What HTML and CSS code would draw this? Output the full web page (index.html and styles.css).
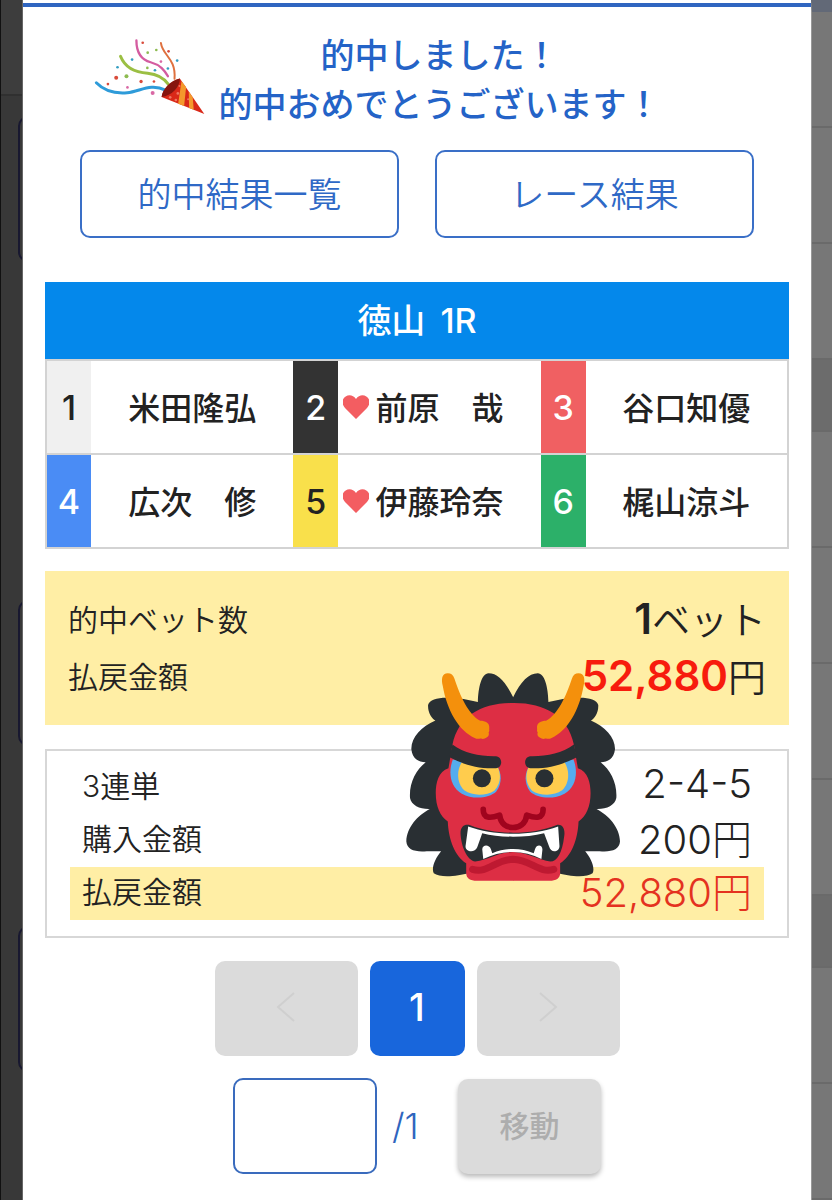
FILE: index.html
```html
<!DOCTYPE html>
<html lang="ja">
<head>
<meta charset="utf-8">
<meta name="viewport" content="width=device-width, initial-scale=1">
<title>的中結果</title>
<link rel="stylesheet" href="styles.css">
</head>
<body>
<div class="page">
  <div class="backdrop backdrop-left">
    <div class="back-header"></div>
    <div class="back-button"></div>
    <div class="back-button far"></div>
    <div class="back-button near"></div>
  </div>
  <main class="modal">
    <header class="congrats">
      <svg class="popper" viewBox="40 113 335 232" aria-hidden="true">
        <g fill="none" stroke-linecap="round">
          <path d="M47 248C70 272 103 281 140 278C180 274 210 248 256 270" stroke="#2e9bd9" stroke-width="9"/>
          <path d="M120 168C134 203 164 217 202 219C232 222 252 235 264 252" stroke="#9bbf43" stroke-width="9"/>
          <path d="M168 120C168 153 182 178 211 186C241 194 253 212 263 228" stroke="#d45ca0" stroke-width="7"/>
          <path d="M242 128C247 166 288 174 283 236" stroke="#df713f" stroke-width="6"/>
        </g>
        <path d="M244 291C247 267 270 243 299 235L373 342Z" fill="#d92818"/>
        <path d="M244 291C246 267 272 240 299 235C300 261 274 287 244 291Z" fill="#86150f"/>
        <path d="M304 243L318 261L312 318L294 311ZM326 274L338 292L341 329L327 324Z" fill="#f4992c"/>
        <g fill="#ef7662"><circle cx="293" cy="280" r="4"/><circle cx="270" cy="292" r="4"/><circle cx="287" cy="300" r="4"/><circle cx="324" cy="298" r="3"/><circle cx="298" cy="258" r="3"/></g>
        <g fill="#d94b3b"><circle cx="107" cy="233" r="6"/><circle cx="82" cy="252" r="4"/><circle cx="182" cy="244" r="5"/><circle cx="221" cy="244" r="4"/><circle cx="187" cy="127" r="4"/><circle cx="265" cy="153" r="4"/></g>
        <g fill="#d968a4"><circle cx="217" cy="279" r="6"/><circle cx="141" cy="262" r="4"/><circle cx="242" cy="184" r="4"/></g>
        <g fill="#8dbb50"><circle cx="138" cy="228" r="6"/><circle cx="202" cy="157" r="4"/><circle cx="228" cy="149" r="4"/><circle cx="201" cy="203" r="4"/></g>
        <g fill="#339dc1"><circle cx="155" cy="178" r="4"/><circle cx="111" cy="201" r="4"/><circle cx="224" cy="210" r="4"/><circle cx="263" cy="205" r="4"/><circle cx="291" cy="181" r="4"/></g>
      </svg>
      <h1 class="message">的中しました！<br>的中おめでとうございます！</h1>
    </header>
    <nav class="actions">
      <button class="action" type="button">的中結果一覧</button>
      <button class="action" type="button">レース結果</button>
    </nav>
    <table class="race">
      <caption class="race-title">徳山 <span class="race-number">1R</span></caption>
      <tbody>
      <tr>
        <th class="num n1" scope="row">1</th><td><div class="racer"><span class="name">米田隆弘</span></div></td>
        <th class="num n2">2</th><td><div class="racer"><svg class="heart" viewBox="0 0 26 24" aria-hidden="true"><path d="M13 24L2 13C-6 4 7-5 13 4C19-5 32 4 24 13Z"/></svg><span class="name">前原　哉</span></div></td>
        <th class="num n3">3</th><td><div class="racer"><span class="name">谷口知優</span></div></td>
      </tr>
      <tr>
        <th class="num n4" scope="row">4</th><td><div class="racer"><span class="name">広次　修</span></div></td>
        <th class="num n5">5</th><td><div class="racer"><svg class="heart" viewBox="0 0 26 24" aria-hidden="true"><path d="M13 24L2 13C-6 4 7-5 13 4C19-5 32 4 24 13Z"/></svg><span class="name">伊藤玲奈</span></div></td>
        <th class="num n6">6</th><td><div class="racer"><span class="name">梶山涼斗</span></div></td>
      </tr>
      </tbody>
    </table>
    <div class="results">
      <dl class="summary">
        <div class="row"><dt>的中ベット数</dt><dd><strong>1</strong>ベット</dd></div>
        <div class="row"><dt>払戻金額</dt><dd><strong class="win">52,880</strong>円</dd></div>
      </dl>
      <dl class="detail">
        <div class="row"><dt>3連単</dt><dd>2-4-5</dd></div>
        <div class="row"><dt>購入金額</dt><dd>200円</dd></div>
        <div class="row payout"><dt>払戻金額</dt><dd>52,880円</dd></div>
      </dl>
      <svg class="oni" viewBox="30 38 646 628" aria-hidden="true">
        <defs>
          <path id="hair" d="M354 114C330 66 307 42 280 42C259 43 249 84 248 128L205 119C150 111 105 113 99 137C98 160 110 178 121 183C79 201 48 234 49 269C52 297 70 307 92 308C62 331 42 371 45 415C49 437 75 449 104 448C68 467 35 503 34 545C36 570 60 577 95 574L138 574C120 595 108 625 116 640C135 655 190 648 220 640L354 640Z"/>
          <path id="face" d="M354 131C260 130 190 169 172 255L160 326C130 335 122 370 122 400C122 440 135 470 158 485C160 540 180 590 213 610L213 638C213 655 225 662 245 662L354 662Z"/>
          <g id="eye">
            <path d="M173 300C160 332 162 380 200 402C235 421 282 415 303 395C322 370 319 338 304 317Z" fill="#55acee"/>
            <path d="M201 306C184 330 184 370 207 392C234 411 275 407 297 393C319 370 318 338 303 315Z" fill="#ffcc4d"/>
            <circle cx="260" cy="356" r="27" fill="#292f33"/>
            <path d="M172 255C208 282 255 291 302 290C323 292 323 324 302 326C247 328 207 315 163 293Z" fill="#292f33"/>
            <path d="M158 42C140 42 138 60 143 80C155 150 190 215 240 236C248 240 254 235 258 237C263 240 269 237 274 234C281 231 282 224 280 219C284 214 281 211 282 207C284 190 270 184 255 184C220 165 195 110 178 58C174 47 168 42 158 42Z" fill="#f4900c"/>
          </g>
        </defs>
        <g fill="#292f33"><use href="#hair"/><use href="#hair" transform="matrix(-1 0 0 1 707 0)"/></g>
        <g fill="#dd2e44"><use href="#face"/><use href="#face" transform="matrix(-1 0 0 1 707 0)"/></g>
        <use href="#eye"/><use href="#eye" transform="matrix(-1 0 0 1 707 0)"/>
        <path d="M264 449C264 477 285 476 313 466C316 493 335 503 353 503C371 503 391 493 394 466C422 476 443 477 443 449" fill="none" stroke="#a0041e" stroke-width="17" stroke-linecap="round" stroke-linejoin="round"/>
        <path d="M196 520C196 498 210 492 225 496C300 526 407 526 482 496C501 491 510 508 506 530C500 580 485 605 465 605C430 600 400 578 353 576C307 578 280 600 240 605C215 600 198 560 196 520Z" fill="#292f33"/>
        <g fill="#fff">
          <path d="M219 500C300 529 407 529 488 500L492 558C492 577 466 581 461 560L446 520C390 534 315 534 261 520L246 562C239 580 211 577 211 559Z"/>
          <path d="M264 597L261 568C262 553 282 553 287 568L291 580C330 563 377 563 415 580L419 567C424 552 441 554 441 569L438 597C385 569 322 569 264 597Z"/>
        </g>
        <path d="M232 628C276 642 300 599 353 598C407 599 431 642 475 628" fill="none" stroke="#be1931" stroke-width="21" stroke-linecap="round"/>
      </svg>
    </div>
    <nav class="pager" aria-label="ページ">
      <button class="page-button wide" type="button" disabled aria-label="前へ"><svg class="chevron" viewBox="0 0 20 30"><path d="M18 1L2 15L18 29"/></svg></button>
      <button class="page-button current" type="button">1</button>
      <button class="page-button wide" type="button" disabled aria-label="次へ"><svg class="chevron" viewBox="0 0 20 30"><path d="M2 1L18 15L2 29"/></svg></button>
    </nav>
    <form class="jump">
      <input class="jump-input" id="jump" type="text" inputmode="numeric">
      <label class="jump-total" for="jump">/1</label>
      <button class="page-button wide go" type="button" disabled>移動</button>
    </form>
  </main>
  <div class="backdrop backdrop-right">
    <div class="line"></div><div class="line"></div><div class="line"></div><div class="line dark"></div>
    <div class="line"></div><div class="line"></div><div class="line"></div><div class="line"></div><div class="line dark"></div>
    <div class="line"></div><div class="line"></div>
  </div>
</div>
</body>
</html>
```
FILE: styles.css
```css
* { box-sizing: border-box; }
body {
  margin: 0;
  background: #fff;
  color: #222;
  font-family: Inter, "Noto Sans CJK JP", sans-serif;
}
button, input { font: inherit; }
.page {
  display: grid;
  grid-template-columns: 23px 1fr 21px;
  min-height: 100vh;
}
.backdrop { overflow: hidden; }
.backdrop-left {
  background: #383838;
  border-left: 1px solid #111;
  border-right: 1px solid #666;
}
.back-header {
  height: 96px;
  background: #3d3d3d;
  border-bottom: 2px solid #303030;
}
.back-button {
  height: 146px;
  margin: 20px -20px 0 17px;
  border: 2px solid #181830;
  border-radius: 10px;
}
.back-button.far { margin-top: 338px; }
.back-button.near { margin-top: 180px; }
.backdrop-right {
  background: #777;
  border-left: 1px solid #999;
  border-top: 12px solid #626977;
}
.line { height: 116px; border-bottom: 2px solid #6a6a6a; }
.line.dark { height: 72px; background: #6c6c6c; }
.modal {
  min-width: 0;
  margin-top: 3px;
  padding: 0 22px 26px;
  border-top: 4px solid #2f65c0;
}
.congrats {
  display: flex;
  justify-content: center;
  align-items: center;
  gap: 14px;
  padding: 24px 80px 0 0;
}
.popper { width: 111px; height: 77px; flex: none; margin-bottom: 8px; }
.message {
  margin: 0;
  color: #2463c7;
  font-size: 34px;
  font-weight: 500;
  line-height: 49px;
  text-align: center;
  white-space: nowrap;
}
.actions {
  display: grid;
  grid-template-columns: 1fr 1fr;
  gap: 36px;
  padding: 21px 35px 0;
}
.action {
  height: 88px;
  padding: 0 0 4px;
  border: 2px solid #3a6fc7;
  border-radius: 10px;
  background: #fff;
  color: #2f69c6;
  font-size: 34px;
  font-weight: 350;
}
.race {
  width: 100%;
  margin-top: 44px;
  border-collapse: collapse;
  table-layout: fixed;
}
.race-title {
  background: #0488eb;
  color: #fff;
  font-size: 34px;
  font-weight: 500;
  line-height: 77px;
}
.race-number { margin-left: 6px; }
.race tr { height: 94px; }
.race td, .race th {
  padding: 0;
  border-top: 2px solid #d3d3d3;
  border-bottom: 2px solid #d3d3d3;
}
.race td:last-child { border-right: 2px solid #d3d3d3; }
.race th:first-child { border-left: 2px solid #d3d3d3; }
.num { width: 45px; font-size: 34px; font-weight: 500; }
.n1 { background: #f0f0f0; }
.n2 { background: #333; color: #fff; }
.n3 { background: #f06062; color: #fff; }
.n4 { background: #4a8cf5; color: #fff; }
.n5 { background: #f9e04b; }
.n6 { background: #2cb069; color: #fff; }
.racer {
  display: grid;
  grid-template-columns: 1fr auto 1fr;
  align-items: center;
}
.heart {
  width: 26px;
  height: 24px;
  margin-right: 6px;
  justify-self: end;
  fill: #f35d61;
}
.name {
  grid-column: 2;
  padding-top: 4px;
  font-size: 32px;
  font-weight: 500;
  line-height: 44px;
  white-space: nowrap;
}
.results { position: relative; margin-top: 22px; }
.summary, .detail { margin: 0; }
.summary { padding: 20px 23px; background: #ffeea5; }
.row {
  display: flex;
  justify-content: space-between;
  align-items: center;
}
.row dt { font-size: 30px; font-weight: 350; }
.row dd { margin: 0; font-size: 38px; font-weight: 350; }
.summary .row { height: 57px; padding-bottom: 4px; }
.row strong { font-size: 42px; font-weight: 600; }
.row .win { color: #f71c0d; }
.detail {
  margin-top: 24px;
  padding: 10px 23px 16px;
  border: 2px solid #d7d7d7;
}
.detail .row { height: 53px; padding: 0 12px 8px; }
.detail dd { font-size: 40px; font-weight: 300; }
.payout { background: #ffeea5; }
.payout dd { color: #e4321f; }
.oni {
  position: absolute;
  top: 101px;
  left: calc(50% - 12px);
  width: 216px;
  height: 210px;
}
.pager {
  display: flex;
  justify-content: center;
  gap: 12px;
  margin-top: 23px;
}
.page-button {
  display: flex;
  justify-content: center;
  align-items: center;
  width: 95px;
  height: 95px;
  padding: 0 0 4px;
  border: 0;
  border-radius: 10px;
  background: #dbdbdb;
}
.page-button.wide { width: 143px; }
.page-button.current {
  background: #1866dc;
  color: #fff;
  font-size: 38px;
  font-weight: 500;
}
.chevron {
  width: 20px;
  height: 30px;
  fill: none;
  stroke: #cfcfcf;
  stroke-width: 2;
}
.jump {
  display: flex;
  justify-content: center;
  align-items: center;
  margin-top: 22px;
}
.jump-input {
  width: 144px;
  height: 96px;
  border: 2px solid #3a6bbd;
  border-radius: 10px;
  background: #fff;
  font-size: 34px;
  text-align: center;
}
.jump-total {
  width: 81px;
  padding-left: 15px;
  color: #2f65be;
  font-size: 36px;
  font-weight: 300;
}
.page-button.go {
  color: #adadad;
  font-size: 30px;
  font-weight: 500;
  box-shadow: 0 3px 5px #bbb;
}
```
